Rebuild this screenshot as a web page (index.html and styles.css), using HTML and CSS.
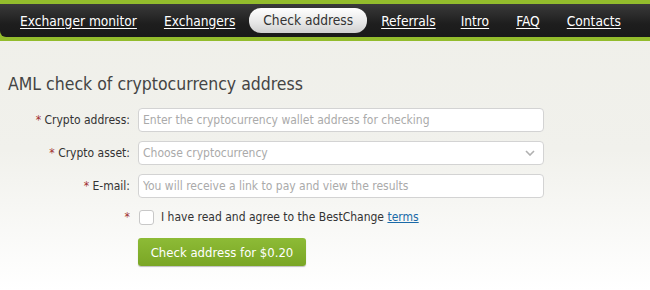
FILE: index.html
```html
<!DOCTYPE html>
<html>
<head>
<meta charset="utf-8">
<link rel="stylesheet" href="styles.css">
</head>
<body>
<header class="topbar">
  <nav class="nav">
    <a class="nav-link" href="#">Exchanger monitor</a>
    <a class="nav-link" href="#">Exchangers</a>
    <a class="nav-link active" href="#">Check address</a>
    <a class="nav-link narrow" href="#">Referrals</a>
    <a class="nav-link" href="#">Intro</a>
    <a class="nav-link" href="#">FAQ</a>
    <a class="nav-link" href="#">Contacts</a>
  </nav>
</header>
<main class="content">
  <h1 class="title">AML check of cryptocurrency address</h1>
  <form class="form">
    <label class="label"><span class="req">*</span> Crypto address:</label>
    <input class="field" type="text" placeholder="Enter the cryptocurrency wallet address for checking">
    <label class="label"><span class="req">*</span> Crypto asset:</label>
    <div class="field select">
      <span class="ph">Choose cryptocurrency</span>
      <svg class="chev" width="10" height="6" viewBox="0 0 10 6"><path d="M1 1l4 4 4-4" fill="none" stroke="#b0b0b0" stroke-width="1.6"/></svg>
    </div>
    <label class="label"><span class="req">*</span> E-mail:</label>
    <input class="field" type="text" placeholder="You will receive a link to pay and view the results">
    <span class="label"><span class="req">*</span></span>
    <div class="agree"><span class="box"></span><span>I have read and agree to the BestChange <a class="link" href="#">terms</a></span></div>
    <span></span>
    <div><button class="btn" type="button">Check address for $0.20</button></div>
  </form>
</main>
</body>
</html>
```
FILE: styles.css
```css
html, body { margin: 0; padding: 0; }
body {
  width: 650px;
  height: 290px;
  overflow: hidden;
  font-family: "DejaVu Sans Condensed", "DejaVu Sans", sans-serif;
  background: linear-gradient(#efefe9 0, #f1f1ec 150px, #ffffff 290px);
  color: #333;
}
.topbar {
  background: #93bc2c;
  padding: 4px 0 4px;
}
.nav {
  height: 33px;
  background: linear-gradient(#3a3a3a, #1e1e1e 60%, #191919);
  border-radius: 0 0 0 6px;
  display: flex;
  align-items: center;
  padding-left: 20px;
  white-space: nowrap;
}
.nav-link {
  flex-shrink: 0;
  color: #fff;
  font-size: 13.65px;
  margin-right: 27px;
  text-decoration: underline;
  text-underline-offset: 2px;
}
.nav-link.narrow { margin-right: 25px; }
.nav-link.active {
  text-decoration: none;
  color: #333;
  background: linear-gradient(#ffffff, #e6e6e6 60%, #cfcfcf);
  border-radius: 12px;
  padding: 4px 14px 5px;
  margin-left: -13px;
  margin-right: 14px;
}
.content { padding: 33px 0 0 8px; }
.title {
  margin: 0 0 14px;
  font-weight: normal;
  font-size: 17.5px;
  color: #444;
}
.form {
  display: grid;
  grid-template-columns: 122px 406px;
  column-gap: 8px;
  row-gap: 9px;
  align-items: center;
}
.label {
  text-align: right;
  font-size: 12px;
  color: #333;
}
.req { color: #a03030; }
.field {
  box-sizing: border-box;
  height: 24px;
  border: 1px solid #d3d3d3;
  border-radius: 4px;
  background: #fff;
  font-family: inherit;
  font-size: 12px;
  padding: 0 4px;
  color: #333;
  margin: 0;
  width: 406px;
}
.field::placeholder { color: #aaa; }
.select {
  display: flex;
  align-items: center;
  justify-content: space-between;
  padding-right: 8px;
}
.ph { color: #aaa; }
.agree {
  display: flex;
  align-items: center;
  gap: 7px;
  font-size: 12px;
  color: #333;
  height: 20px;
}
.box {
  width: 13px;
  height: 13px;
  border: 1px solid #c8c8c8;
  border-radius: 3px;
  background: #fff;
  margin-left: 1px;
}
.link { color: #1a6aa8; }
.btn {
  margin-top: 2px;
  width: 168px;
  height: 28px;
  border: none;
  border-radius: 3px;
  background: linear-gradient(#8dbb36, #7aa625);
  box-shadow: 0 1px 1px rgba(0,0,0,0.25);
  color: #fff;
  font-family: inherit;
  font-size: 13px;
  cursor: pointer;
}
```
